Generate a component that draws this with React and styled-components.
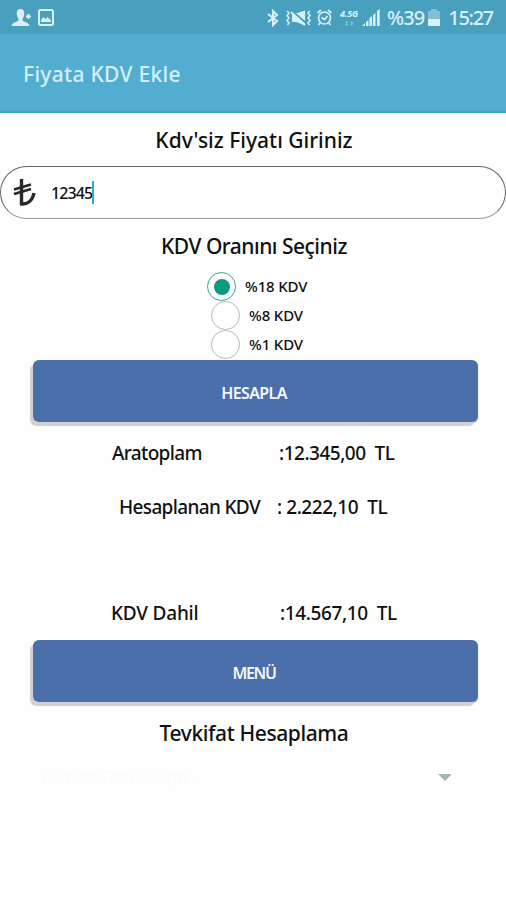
import React from "react";
import styled, { createGlobalStyle } from "styled-components";

const Global = createGlobalStyle`
  * { box-sizing: border-box; }
  body { margin: 0; background: #fefefe; font-family: "Noto Sans", "Open Sans", sans-serif; color: #111; }
`;
const Screen = styled.div`
  width: 506px; height: 900px; overflow: hidden; background: #fefefe;
  display: flex; flex-direction: column;
`;
const StatusBar = styled.header`
  height: 34px; flex: none; background: #489fbe; color: #d9f0f8;
  display: flex; align-items: center; padding: 1px 13px 0 11px;
`;
const Spacer = styled.div`flex: 1;`;
const StatusIcon = styled.svg`
  flex: none; display: block; margin-left: ${(p) => p.$gap || 0}px; overflow: visible;
`;
const Network = styled.div`
  margin-left: 7px; width: 20px; height: 18px; font-size: 9px; line-height: 10px;
  font-weight: 700; font-style: italic; letter-spacing: -0.2px;
  display: flex; flex-direction: column; align-items: center; gap: 2px;
`;
const StatusText = styled.span`
  font-size: 20px; line-height: 30px; font-weight: 500; margin-left: ${(p) => p.$gap}px;
  letter-spacing: ${(p) => p.$spacing}px; white-space: nowrap;
`;
const AppBar = styled.div`
  height: 79px; flex: none; background: #52add1; border-bottom: 2px solid #3ba5cc;
  padding: 3px 0 0 23px; display: flex; align-items: center;
  color: #d3f0fa; font-size: 21px; font-weight: 500; letter-spacing: 0.3px;
`;
const Heading = styled.h2`
  margin: 0 0 0 2px; height: ${(p) => p.$height}px; flex: none;
  display: flex; align-items: center; justify-content: center;
  font-size: 21px; font-weight: 500; white-space: nowrap; letter-spacing: ${(p) => p.$spacing}px;
`;
const PriceField = styled.div`
  height: 53px; flex: none; border: 1px solid #666; border-bottom-color: #999; border-radius: 27px;
  display: flex; align-items: center; padding-left: 12px;
`;
const PriceValue = styled.span`
  font-size: 16px; font-weight: 500; line-height: 24px; margin-left: 14px; letter-spacing: -0.9px;
`;
const Cursor = styled.span`width: 2px; height: 23px; background: #29a9cc;`;
const RadioGroup = styled.div`display: flex; flex-direction: column; height: 88px; flex: none;`;
const RadioRow = styled.div`
  height: 29px; display: flex; align-items: center;
  padding-left: ${(p) => (p.$on ? 207 : 211)}px;
`;
const Radio = styled.span`
  width: 29px; height: 29px; border-radius: 50%; flex: none;
  border: ${(p) => (p.$on ? "1.5px solid #35a78f" : "1px solid #b4bcbb")};
  display: grid; place-items: center;
  &::after {
    content: ""; width: 16px; height: 16px; border-radius: 50%;
    background: ${(p) => (p.$on ? "#0b9a80" : "transparent")};
  }
`;
const RadioLabel = styled.span`
  margin: -2px 0 0 9px; font-size: 15px; font-weight: 500; letter-spacing: -0.15px; white-space: nowrap;
`;
const Button = styled.button`
  width: 445px; height: 62px; flex: none; margin: 0 0 0 33px; padding: 3px 3px 0 0; border: 0; border-radius: 6px;
  background: #4a6fab; color: #f5f8ff; box-shadow: -3px 4px 1px #d0d0d0, 0 1px 1px #8b97ac;
  font: 600 16px "Noto Sans", sans-serif; letter-spacing: ${(p) => p.$spacing}px;
`;
const ResultRow = styled.div`
  height: ${(p) => p.$height}px; flex: none; display: flex; align-items: center;
  margin-top: ${(p) => p.$top || 0}px;
  padding: 0 0 1px ${(p) => p.$left}px; font-size: 19px; font-weight: 500; white-space: pre;
`;
const ResultLabel = styled.span`width: ${(p) => p.$width}px; letter-spacing: ${(p) => p.$spacing}px;`;
const ResultValue = styled.span`letter-spacing: ${(p) => p.$spacing}px;`;
const Select = styled.div`
  height: 26px; flex: none; padding: 0 54px 0 40px; display: flex; align-items: center;
  justify-content: space-between; color: #fbfbfb; font-size: 16px;
`;

export default function App() {
  return (
    <Screen>
      <Global />
      <StatusBar>
        <StatusIcon width="20" height="18" viewBox="0 0 20 18" fill="currentColor">
          <path d="M9.5 0C6.500 0 5.400 2.500 5.800 5.500c.2 2 .9 3.200 1.700 4.200v2L2.500 14Q.7 14.800.5 17h18q-.2-2.200-2-3l-5-2.300v-2c.8-1 1.500-2.200 1.700-4.200.4-3-.7-5.500-3.700-5.500Z" />
          <path d="M15 6.500h1.500v-1.700h1.900v1.700h1.600v1.900h-1.600v1.700h-1.900V8.400H15Z" />
        </StatusIcon>
        <StatusIcon $gap={7} width="16" height="18" viewBox="0 0 16 18" fill="none" stroke="currentColor">
          <rect x="1" y="1" width="14" height="15" rx="1.500" strokeWidth="2" />
          <path d="M3 13V11l2.500-3 2 2 2-2 3.500 3.500V13Z" fill="currentColor" stroke="none" />
        </StatusIcon>
        <Spacer />
        <StatusIcon width="12" height="16" viewBox="0 0 12 16" fill="none" stroke="currentColor" strokeWidth="2.100">
          <path d="M1 4l9 7-4 4V1l4 4-9 7" />
        </StatusIcon>
        <StatusIcon $gap={7} width="25" height="16" viewBox="0 0 25 16" fill="none" stroke="currentColor" strokeWidth="1.500">
          <path d="M1 1l2 2-2 2.500 2 2.500-2 2.500 2 2.500-1.500 2M24 1l-2 2 2 2.500-2 2.500 2 2.500-2 2.500 1.500 2" />
          <path d="M6 3.500h4l9-3v15l-9-3.500H6Z" fill="currentColor" stroke="none" />
          <path d="M6 1l14 12" stroke="#489fbe" strokeWidth="2" />
          <path d="M5 2l14 13" strokeWidth="1.800" />
        </StatusIcon>
        <StatusIcon $gap={6} width="15" height="17" viewBox="0 0 15 17" fill="none" stroke="currentColor" strokeWidth="1.700">
          <circle cx="7.500" cy="9" r="6" />
          <path d="M.5 4 4 1M14.500 4 11 1M4.500 8.500l3 2 3-3.500M3 14l-1.500 2M12 14l1.500 2" />
        </StatusIcon>
        <Network>
          <span>4.5G</span>
          <StatusIcon width="9" height="5" viewBox="0 0 9 5" fill="currentColor" opacity=".4">
            <path d="M1 0h1.500v3H4L1.700 5 0 3h1ZM6 5h1.500V2H9L6.700 0 5 2h1Z" />
          </StatusIcon>
        </Network>
        <StatusIcon $gap={3} width="18" height="17" viewBox="0 0 18 17" fill="currentColor">
          <path d="M0 17l3-3v3ZM4 13l2.500-2v6H4ZM7.500 9l2.500-2v10H7.500ZM11 6l2.500-2v13H11ZM15 2l2.700-2v17H15Z" />
        </StatusIcon>
        <StatusText $gap={7} $spacing={-0.9}>%39</StatusText>
        <StatusIcon $gap={4} width="12" height="17" viewBox="0 0 12 17" fill="currentColor">
          <path d="M3 0h6v2h3v9H0V2h3Z" opacity=".4" />
          <path d="M0 10h12v7H0Z" />
        </StatusIcon>
        <StatusText $gap={8} $spacing={-1.3}>15:27</StatusText>
      </StatusBar>
      <AppBar>Fiyata KDV Ekle</AppBar>
      <Heading $height={53} $spacing={0}>Kdv'siz Fiyatı Giriniz</Heading>
      <PriceField>
        <StatusIcon width="24" height="30" viewBox="0 0 24 30" fill="none" stroke="#292929">
          <path d="M8.500 1v25c6 .5 11-3.500 12.500-11" strokeWidth="3.400" />
          <path d="M1 11.500 18 6.500M1 16 18 11" strokeWidth="2.700" />
        </StatusIcon>
        <PriceValue>12345</PriceValue>
        <Cursor />
      </PriceField>
      <Heading $height={53} $spacing={-0.5}>KDV Oranını Seçiniz</Heading>
      <RadioGroup>
        <RadioRow $on><Radio $on /><RadioLabel>%18 KDV</RadioLabel></RadioRow>
        <RadioRow><Radio /><RadioLabel>%8 KDV</RadioLabel></RadioRow>
        <RadioRow><Radio /><RadioLabel>%1 KDV</RadioLabel></RadioRow>
      </RadioGroup>
      <Button $spacing={-0.6}>HESAPLA</Button>
      <ResultRow $height={62} $left={112}>
        <ResultLabel $width={167} $spacing={-0.65}>Aratoplam</ResultLabel>
        <ResultValue $spacing={-0.5}>:12.345,00  TL</ResultValue>
      </ResultRow>
      <ResultRow $height={46} $left={119}>
        <ResultLabel $width={158} $spacing={-0.65}>Hesaplanan KDV</ResultLabel>
        <ResultValue $spacing={-0.45}>: 2.222,10  TL</ResultValue>
      </ResultRow>
      <ResultRow $height={54} $top={56} $left={111}>
        <ResultLabel $width={169} $spacing={-0.2}>KDV Dahil</ResultLabel>
        <ResultValue $spacing={-0.4}>:14.567,10  TL</ResultValue>
      </ResultRow>
      <Button $spacing={-1.3}>MENÜ</Button>
      <Heading $height={62} $spacing={-0.4}>Tevkifat Hesaplama</Heading>
      <Select>
        <span>Tevkifat Oranı Seçin..</span>
        <StatusIcon width="14" height="7" viewBox="0 0 14 7" fill="#a3b7b1"><path d="M0 0h14L7 7Z" /></StatusIcon>
      </Select>
    </Screen>
  );
}
